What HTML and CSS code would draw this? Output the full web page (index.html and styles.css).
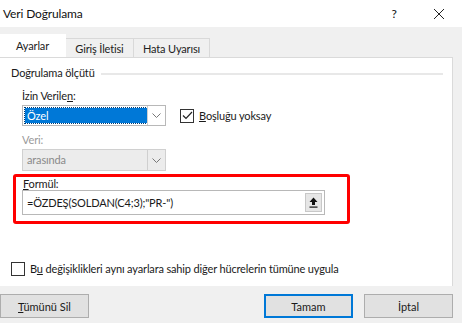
FILE: index.html
```html
<!DOCTYPE html>
<html lang="tr">
<head>
  <meta charset="UTF-8">
  <title>Veri Doğrulama</title>
  <link rel="stylesheet" href="styles.css">
</head>
<body>
  <div class="titlebar">
    <span class="title">Veri Doğrulama</span>
    <span class="help">?</span>
    <span class="close">
      <svg width="12" height="12" viewBox="0 0 12 12"><path d="M1 1 L11 11 M11 1 L1 11" stroke="#222" stroke-width="1"/></svg>
    </span>
  </div>

  <div class="tabs">
    <div class="tab active">Ayarlar</div>
    <div class="tab">Giriş İletisi</div>
    <div class="tab">Hata Uyarısı</div>
  </div>

  <div class="panel">
    <div class="group-head">
      <span>Doğrulama ölçütü</span>
      <span class="rule"></span>
    </div>

    <div class="label">İzin Verile<u>n</u>:</div>
    <div class="row">
      <div class="select">
        <span class="value selected">Özel</span>
        <span class="arrow"><svg width="9" height="5" viewBox="0 0 9 5"><path d="M0.5 0.5 L4.5 4.5 L8.5 0.5" fill="none" stroke="#777"/></svg></span>
      </div>
      <label class="check">
        <span class="box"><svg width="11" height="9" viewBox="0 0 11 9"><path d="M1 4.5 L4 7.5 L10 1" fill="none" stroke="#222" stroke-width="1.2"/></svg></span>
        <span><u>B</u>oşluğu yoksay</span>
      </label>
    </div>

    <div class="label muted">Veri:</div>
    <div class="select disabled">
      <span class="value">arasında</span>
      <span class="arrow"><svg width="9" height="5" viewBox="0 0 9 5"><path d="M0.5 0.5 L4.5 4.5 L8.5 0.5" fill="none" stroke="#777"/></svg></span>
    </div>

    <div class="highlight">
      <div class="label"><u>F</u>ormül:</div>
      <div class="formula">
        <span class="value">=ÖZDEŞ(SOLDAN(C4;3);"PR-")</span>
        <span class="pick"><svg width="9" height="11" viewBox="0 0 9 11"><path d="M4.5 0.5 L8.5 5 L6 5 L6 8 L3 8 L3 5 L0.5 5 Z" fill="#111"/><rect x="0.5" y="9.5" width="8" height="1.2" fill="#111"/></svg></span>
      </div>
    </div>

    <label class="check apply">
      <span class="box"></span>
      <span>B<u>u</u> değişiklikleri aynı ayarlara sahip diğer hücrelerin tümüne uygula</span>
    </label>
  </div>

  <div class="buttons">
    <button class="btn"><u>T</u>ümünü Sil</button>
    <span class="spacer"></span>
    <button class="btn default">Tamam</button>
    <button class="btn">İptal</button>
  </div>
</body>
</html>
```

FILE: styles.css
```css
body {
  margin: 0;
  width: 462px;
  height: 323px;
  overflow: hidden;
  background: #f0f0f0;
  font-family: Lato, "Noto Sans", sans-serif;
  font-size: 11px;
  letter-spacing: -0.15px;
  line-height: 15px;
  color: #1a1a1a;
}
u {
  text-decoration: underline;
  text-underline-offset: 1px;
}
.titlebar {
  height: 27px;
  background: #fff;
  display: flex;
  align-items: center;
  padding-left: 3px;
  font-size: 12px;
  color: #111;
}
.title {
  flex: 1;
}
.help {
  width: 44px;
  text-align: center;
}
.close {
  width: 46px;
  display: flex;
  justify-content: center;
}
.tabs {
  display: flex;
  align-items: flex-end;
  margin-top: 8px;
  height: 22px;
  position: relative;
  z-index: 1;
}
.tab {
  height: 19px;
  line-height: 19px;
  box-sizing: border-box;
  border: 1px solid #d9d9d9;
  border-bottom: none;
  border-left: none;
  background: #f0f0f0;
  color: #222;
  text-align: center;
  white-space: nowrap;
}
.tab.active {
  width: 66px;
  height: 23px;
  line-height: 21px;
  background: #fff;
  border-color: #fff;
}
.tab:nth-child(2) {
  width: 68px;
}
.tab:nth-child(3) {
  width: 76px;
}
.panel {
  width: 453px;
  height: 229px;
  box-sizing: border-box;
  background: #fff;
  border-right: 1px solid #dadada;
  border-top: 1px solid #dadada;
  padding-top: 7px;
}
.group-head {
  display: flex;
  align-items: center;
  padding-left: 11px;
  padding-right: 9px;
  gap: 6px;
}
.rule {
  flex: 1;
  height: 2px;
  background: #e8e8e8;
  margin-top: 2px;
}
.label {
  margin: 8px 0 0 22px;
  height: 15px;
}
.label.muted {
  color: #9a9a9a;
  margin-top: 6px;
}
.row {
  display: flex;
  align-items: center;
  gap: 14px;
  margin-top: 2px;
}
.select {
  margin-left: 22px;
  width: 144px;
  height: 21px;
  box-sizing: border-box;
  border: 1px solid #b8b8b8;
  display: flex;
  align-items: stretch;
  padding: 2px 0 2px 2px;
}
.select .value {
  flex: 1;
  line-height: 15px;
  padding-left: 2px;
}
.select .value.selected {
  background: #0078d7;
  color: #fff;
  outline: 1px dotted #003c74;
}
.select .arrow {
  width: 17px;
  margin: -2px 0;
  border-left: 1px solid #cfcfcf;
  display: flex;
  align-items: center;
  justify-content: center;
}
.select.disabled {
  background: #ececec;
  border-color: #d0d0d0;
  color: #8a8a8a;
  margin-top: 2px;
  height: 22px;
}
.check {
  display: flex;
  align-items: center;
  gap: 5px;
}
.box {
  width: 12px;
  height: 12px;
  border: 1px solid #333;
  display: flex;
  align-items: center;
  justify-content: center;
  background: #fff;
}
.highlight {
  margin: 3px 0 0 13px;
  width: 337px;
  height: 50px;
  box-sizing: border-box;
  border: 3px solid #f00;
  border-radius: 3px;
}
.highlight .label {
  margin: 0 0 0 7px;
  height: 13px;
  line-height: 13px;
}
.formula {
  margin-left: 6px;
  width: 303px;
  height: 25px;
  box-sizing: border-box;
  border: 1px solid #b8b8b8;
  display: flex;
  align-items: center;
  padding: 2px;
}
.formula .value {
  flex: 1;
  padding-left: 2px;
}
.pick {
  width: 17px;
  height: 19px;
  background: #e6e6e6;
  border: 1px solid #c8c8c8;
  box-sizing: border-box;
  display: flex;
  align-items: center;
  justify-content: center;
}
.apply {
  margin: 37px 0 0 11px;
}
.buttons {
  display: flex;
  align-items: center;
  margin-top: 8px;
}
.spacer {
  flex: 1;
}
.btn {
  font: inherit;
  width: 89px;
  height: 24px;
  background: #e1e1e1;
  border: 1px solid #adadad;
  color: #1a1a1a;
  padding: 0;
}
.btn.default {
  border: 2px solid #0078d7;
  margin-right: 11px;
}
.btn:last-child {
  margin-right: 9px;
}
```
